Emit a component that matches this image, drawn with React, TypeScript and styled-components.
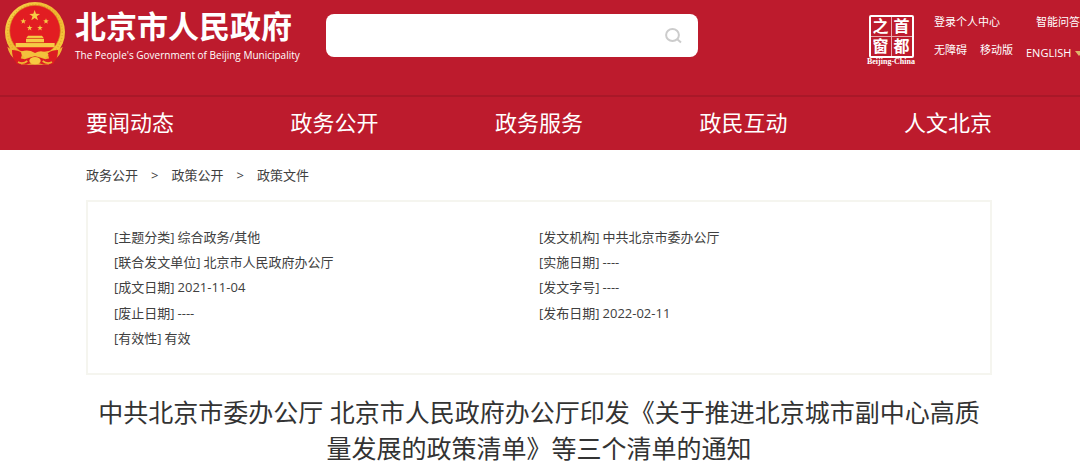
import React from 'react';
import styled, { createGlobalStyle } from 'styled-components';

const GlobalStyle = createGlobalStyle`
  * { box-sizing: border-box; }
  body {
    margin: 0;
    background: #fff;
    color: #404040;
    font-family: "Open Sans", "Noto Sans CJK SC", sans-serif;
    font-size: 13px;
    overflow-x: hidden;
  }
  a { color: inherit; text-decoration: none; }
`;

const Header = styled.header`
  background: #bd1b2d;
  color: #fff;
`;

const TopBar = styled.div`
  display: flex;
  align-items: flex-start;
  min-height: 95px;
  overflow: hidden;
`;

const Brand = styled.a`
  display: flex;
  flex: none;
  align-items: flex-start;
  gap: 9px;
  width: 326px;
  padding: 2px 0 0 4px;

  svg { flex: none; }
`;

const BrandText = styled.span`
  display: flex;
  flex-direction: column;
  padding-top: 4px;
`;

const BrandName = styled.span`
  font-size: 31px;
  font-weight: 700;
  line-height: 40px;
  white-space: nowrap;
`;

const BrandEnglish = styled.span`
  font-size: 10px;
  line-height: 18px;
  white-space: nowrap;
`;

const Search = styled.form`
  display: flex;
  flex: 0 1 372px;
  align-items: center;
  height: 43px;
  margin-top: 14px;
  padding-right: 16px;
  border-radius: 8px;
  background: #fff;
`;

const SearchInput = styled.input`
  flex: 1;
  min-width: 0;
  height: 100%;
  padding: 0 12px;
  border: 0;
  outline: 0;
  background: transparent;
  font: inherit;
`;

const SearchButton = styled.button`
  display: flex;
  padding: 0;
  border: 0;
  background: transparent;
`;

const Seal = styled.a`
  display: flex;
  flex-direction: column;
  align-items: center;
  width: 50px;
  margin: 15px 18px 0 auto;
`;

const SealGrid = styled.span`
  display: grid;
  grid-template-columns: 1fr 1fr;
  gap: 1px;
  width: 45px;
  border: 2px solid #fff;
  border-radius: 2px;
  background: #e9a9b0;
`;

const SealCell = styled.span`
  background: #bd1b2d;
  font-size: 16px;
  font-weight: 700;
  line-height: 19px;
  text-align: center;
`;

const SealCaption = styled.span`
  font-family: "Liberation Serif", serif;
  font-size: 8px;
  font-weight: 700;
  line-height: 8px;
  white-space: nowrap;
`;

const Tools = styled.div`
  display: flex;
  flex: none;
  flex-direction: column;
  gap: 12px;
  width: 146px;
  padding-top: 14px;
  font-size: 11px;
  line-height: 16px;
  white-space: nowrap;
`;

const ToolRow = styled.div<{ $spread?: boolean }>`
  display: flex;
  justify-content: ${(p) => (p.$spread ? 'space-between' : 'flex-start')};
  gap: 13px;
`;

const Language = styled.a`
  display: flex;
  align-items: center;
  gap: 4px;
  padding-top: 3px;
`;

const Nav = styled.nav`
  display: flex;
  justify-content: space-between;
  padding: 0 88px 2px 86px;
  border-top: 2px solid #a91828;
  font-size: 22px;
  line-height: 51px;
  white-space: nowrap;
`;

const Main = styled.main`
  padding: 0 88px 0 86px;
`;

const Breadcrumb = styled.nav`
  display: flex;
  gap: 13px;
  padding: 12px 0;
  line-height: 26px;
`;

const Panel = styled.section`
  padding: 22px 26px;
  border: 2px solid #f5f5ef;
`;

const Facts = styled.dl`
  display: grid;
  grid-template-columns: 1fr 1fr;
  grid-auto-rows: 1fr;
  min-height: 127px;
  margin: 0;
`;

const Fact = styled.div`
  display: flex;
  align-items: center;
  gap: 3px;
  line-height: 20px;
`;

const Term = styled.dt``;

const Value = styled.dd`
  margin: 0;
`;

const Title = styled.h1`
  margin: 19px 0 0;
  color: #333;
  font-size: 25px;
  font-weight: 400;
  line-height: 36px;
  text-align: center;
`;

const star = (cx: number, cy: number, r: number) =>
  Array.from({ length: 10 }, (_, i) => {
    const d = i % 2 ? r * 0.4 : r;
    const a = (Math.PI / 5) * i - Math.PI / 2;
    return `${cx + d * Math.cos(a)},${cy + d * Math.sin(a)}`;
  }).join(' ');

const Emblem = () => (
  <svg width="62" height="64" viewBox="12 8 186 192" aria-hidden="true">
    <defs>
      <linearGradient id="gold" x1="0" y1="0" x2="1" y2="1">
        <stop offset="0" stopColor="#f8d64c" />
        <stop offset="0.5" stopColor="#eeb62f" />
        <stop offset="1" stopColor="#f9cf3f" />
      </linearGradient>
    </defs>
    <circle cx="105" cy="98" r="90" fill="url(#gold)" />
    <circle cx="105" cy="98" r="82" fill="none" stroke="#e5a52a" strokeWidth="4" strokeDasharray="3 6" />
    <circle cx="105" cy="94" r="76" fill="#e21d22" stroke="#d98a20" strokeWidth="2" />
    <g fill="#f6cb45">
      <polygon points={star(104, 49, 17)} />
      <polygon points={star(70, 66, 9)} />
      <polygon points={star(138, 66, 9)} />
      <polygon points={star(89, 86, 9)} />
      <polygon points={star(120, 86, 9)} />
      <path d="M84 109h42l5 7H79zM78 118h54v11H78zM47 131h117v13H47z" />
    </g>
    <path d="M83 117h44M78 130h54" stroke="#d4711e" strokeWidth="2" />
    <path d="M22 142q16 14 38 12l45 8 45-8q22 2 38-12-6 30-30 42l-12 12H64l-12-12Q28 172 22 142z" fill="#efb533" />
    <path d="M36 152q18 0 31 10l-5 18-18 4q-8-12-8-32zM174 152q-18 0-31 10l5 18 18 4q8-12 8-32z" fill="#dc1c22" />
    <path d="M40 172l10 22 28 2 27-8 27 8 28-2 10-22-34 8-31-10-31 10z" fill="#dc1c22" />
    <path d="M64 157q20-8 41 4 21-12 41 4l-12 12q-14-8-29-6-15-2-29 6l-12-12z" fill="#f3c13c" />
    <path d="M54 188q14 8 28-3M156 188q-14 8-28-3" fill="none" stroke="#efb533" strokeWidth="5" />
    <ellipse cx="105" cy="184" rx="17" ry="11" fill="#f6ca42" />
  </svg>
);

const SearchIcon = () => (
  <svg width="17" height="16" viewBox="0 0 17 16" fill="none" stroke="#ccc" strokeWidth="2" aria-hidden="true">
    <ellipse cx="7.5" cy="7" rx="6.4" ry="6" />
    <path d="M12 11l4 3.5" />
  </svg>
);

const Caret = () => (
  <svg width="8" height="5" viewBox="0 0 8 5" aria-hidden="true">
    <path d="M0 0h8L4 5z" fill="#e0b56a" />
  </svg>
);

const sections = ['要闻动态', '政务公开', '政务服务', '政民互动', '人文北京'];

const facts = [
  ['[主题分类]', '综合政务/其他'],
  ['[发文机构]', '中共北京市委办公厅'],
  ['[联合发文单位]', '北京市人民政府办公厅'],
  ['[实施日期]', '----'],
  ['[成文日期]', '2021-11-04'],
  ['[发文字号]', '----'],
  ['[废止日期]', '----'],
  ['[发布日期]', '2022-02-11'],
  ['[有效性]', '有效'],
];

export default function App() {
  return (
    <>
      <GlobalStyle />
      <Header>
        <TopBar>
          <Brand href="#">
            <Emblem />
            <BrandText>
              <BrandName>北京市人民政府</BrandName>
              <BrandEnglish>The People's Government of Beijing Municipality</BrandEnglish>
            </BrandText>
          </Brand>
          <Search role="search">
            <SearchInput type="search" aria-label="搜索" />
            <SearchButton type="button" aria-label="搜索">
              <SearchIcon />
            </SearchButton>
          </Search>
          <Seal href="#">
            <SealGrid>
              <SealCell>之</SealCell>
              <SealCell>首</SealCell>
              <SealCell>窗</SealCell>
              <SealCell>都</SealCell>
            </SealGrid>
            <SealCaption>Beijing-China</SealCaption>
          </Seal>
          <Tools>
            <ToolRow $spread>
              <a href="#">登录个人中心</a>
              <a href="#">智能问答</a>
            </ToolRow>
            <ToolRow>
              <a href="#">无障碍</a>
              <a href="#">移动版</a>
              <Language href="#">
                ENGLISH
                <Caret />
              </Language>
            </ToolRow>
          </Tools>
        </TopBar>
        <Nav>
          {sections.map((s) => (
            <a href="#" key={s}>{s}</a>
          ))}
        </Nav>
      </Header>
      <Main>
        <Breadcrumb>
          <a href="#">政务公开</a>
          <span>&gt;</span>
          <a href="#">政策公开</a>
          <span>&gt;</span>
          <a href="#">政策文件</a>
        </Breadcrumb>
        <Panel>
          <Facts>
            {facts.map(([term, value]) => (
              <Fact key={term}>
                <Term>{term}</Term>
                <Value>{value}</Value>
              </Fact>
            ))}
          </Facts>
        </Panel>
        <Title>中共北京市委办公厅 北京市人民政府办公厅印发《关于推进北京城市副中心高质量发展的政策清单》等三个清单的通知</Title>
      </Main>
    </>
  );
}
